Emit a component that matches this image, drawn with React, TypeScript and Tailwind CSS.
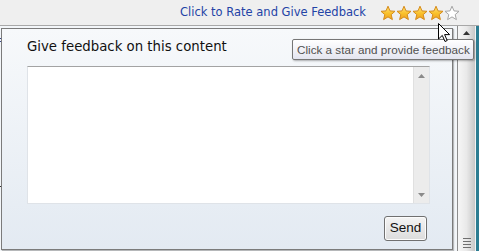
const STAR = "M8 1.2 L10 5.9 L15 6.3 L11.2 9.6 L12.4 14.6 L8 11.9 L3.6 14.6 L4.8 9.6 L1 6.3 L6 5.9 Z";

function Star({ filled }: { filled: boolean }) {
  return (
    <svg width="16" height="16" viewBox="0 0 16 16">
      <defs>
        <linearGradient id="gold" x1="0" y1="0" x2="0" y2="1">
          <stop offset="0" stopColor="#ffe27a" />
          <stop offset="0.55" stopColor="#f9c02a" />
          <stop offset="1" stopColor="#f0a020" />
        </linearGradient>
      </defs>
      <path
        d={STAR}
        fill={filled ? "url(#gold)" : "#ffffff"}
        stroke={filled ? "#d58b1b" : "#a5a5a5"}
        strokeWidth="1"
        strokeLinejoin="round"
      />
    </svg>
  );
}

function Arrow({ up }: { up: boolean }) {
  return (
    <svg width="7" height="4" viewBox="0 0 7 4">
      <path d={up ? "M0 4 L3.5 0 L7 4 Z" : "M0 0 L3.5 4 L7 0 Z"} fill="#8a8a8a" />
    </svg>
  );
}

export default function App() {
  return (
    <div className="relative h-[251px] w-[479px] overflow-hidden bg-[#efefef] font-['DejaVu_Sans',sans-serif]">
      {/* rating strip */}
      <div className="flex h-[26px] items-center justify-end gap-[14px] border-b border-[#a8a8a8] pr-[19px]">
        <span className="pt-[1px] text-[11.5px] text-[#2343a6]">Click to Rate and Give Feedback</span>
        <div className="flex">
          {[1, 2, 3, 4, 5].map((n) => (
            <Star key={n} filled={n <= 4} />
          ))}
        </div>
      </div>

      {/* page underneath */}
      <div className="flex h-[225px]">
        <div className="relative flex-1 border-r border-[#8c8c8c] bg-[#f3f6f9]">
          <span className="absolute left-0 top-[12px] h-px w-[2px] bg-[#3a4a8a]" />
          <span className="absolute left-0 top-[15px] h-px w-[2px] bg-[#3a4a8a]" />
          <span className="absolute left-0 top-[160px] h-px w-[2px] bg-[#333]" />
        </div>
        <div className="flex w-[18px] flex-col items-center justify-between border-r border-[#f4f4f4] bg-gradient-to-r from-[#f6f6f6] via-[#e9e9e9] to-[#c8c8c8] pb-[3px] pt-[5px]">
          <svg width="7" height="4" viewBox="0 0 7 4">
            <path d="M0 4 L3.5 0 L7 4 Z" fill="#333" />
          </svg>
          <div className="flex flex-col gap-[2px]">
            {[0, 1, 2, 3].map((i) => (
              <span key={i} className="block h-px w-[8px] bg-[#6f6f6f]" />
            ))}
          </div>
        </div>
        <div className="w-[3px] bg-[#2d7d92]" />
      </div>

      {/* feedback popup */}
      <div className="absolute left-[1px] top-[28px] flex h-[222px] w-[452px] flex-col border border-[#7b7b7b] bg-gradient-to-b from-[#f7f9fb] to-[#e3eaf2] pl-[25px] pt-[10px] shadow-[1px_1px_1px_rgba(0,0,0,0.25)]">
        <p className="text-[13.3px] leading-[16px] text-[#111]">Give feedback on this content</p>
        <div className="mt-[11px] flex h-[138px] w-[403px] border border-[#dfe3e8] border-t-[#a3a3a3] bg-white">
          <div className="flex-1" />
          <div className="flex w-[16px] flex-col items-center justify-between border-l border-[#e0e0e0] bg-[#ececec] pb-[6px] pt-[7px]">
            <Arrow up />
            <Arrow up={false} />
          </div>
        </div>
        <div className="mt-[12px] flex w-[400px] justify-end">
          <button className="h-[25px] w-[43px] rounded-[3px] border border-[#707070] bg-gradient-to-b from-[#f4f4f4] to-[#dcdcdc] font-['Liberation_Sans',sans-serif] text-[13.5px] text-[#111] shadow-[inset_0_0_0_1px_#fcfcfc]">
            Send
          </button>
        </div>
      </div>

      {/* tooltip */}
      <div className="absolute left-[292px] top-[39px] flex h-[21px] w-[182px] items-center rounded-[2px] border border-[#767676] bg-gradient-to-b from-[#ffffff] to-[#e4e5f0] pl-[4px] font-['Liberation_Sans',sans-serif] text-[11.7px] text-[#505050] shadow-[1px_1px_2px_rgba(0,0,0,0.3)]">
        Click a star and provide feedback
      </div>

      {/* mouse pointer */}
      <svg className="absolute left-[438px] top-[23px]" width="13" height="20" viewBox="0 0 13 20">
        <path
          d="M0.5 0.5 L0.5 16 L4.3 12.4 L7 18.5 L9.2 17.5 L6.6 11.6 L11.6 11.6 Z"
          fill="#fff"
          stroke="#000"
          strokeWidth="1"
          strokeLinejoin="miter"
        />
      </svg>
    </div>
  );
}
